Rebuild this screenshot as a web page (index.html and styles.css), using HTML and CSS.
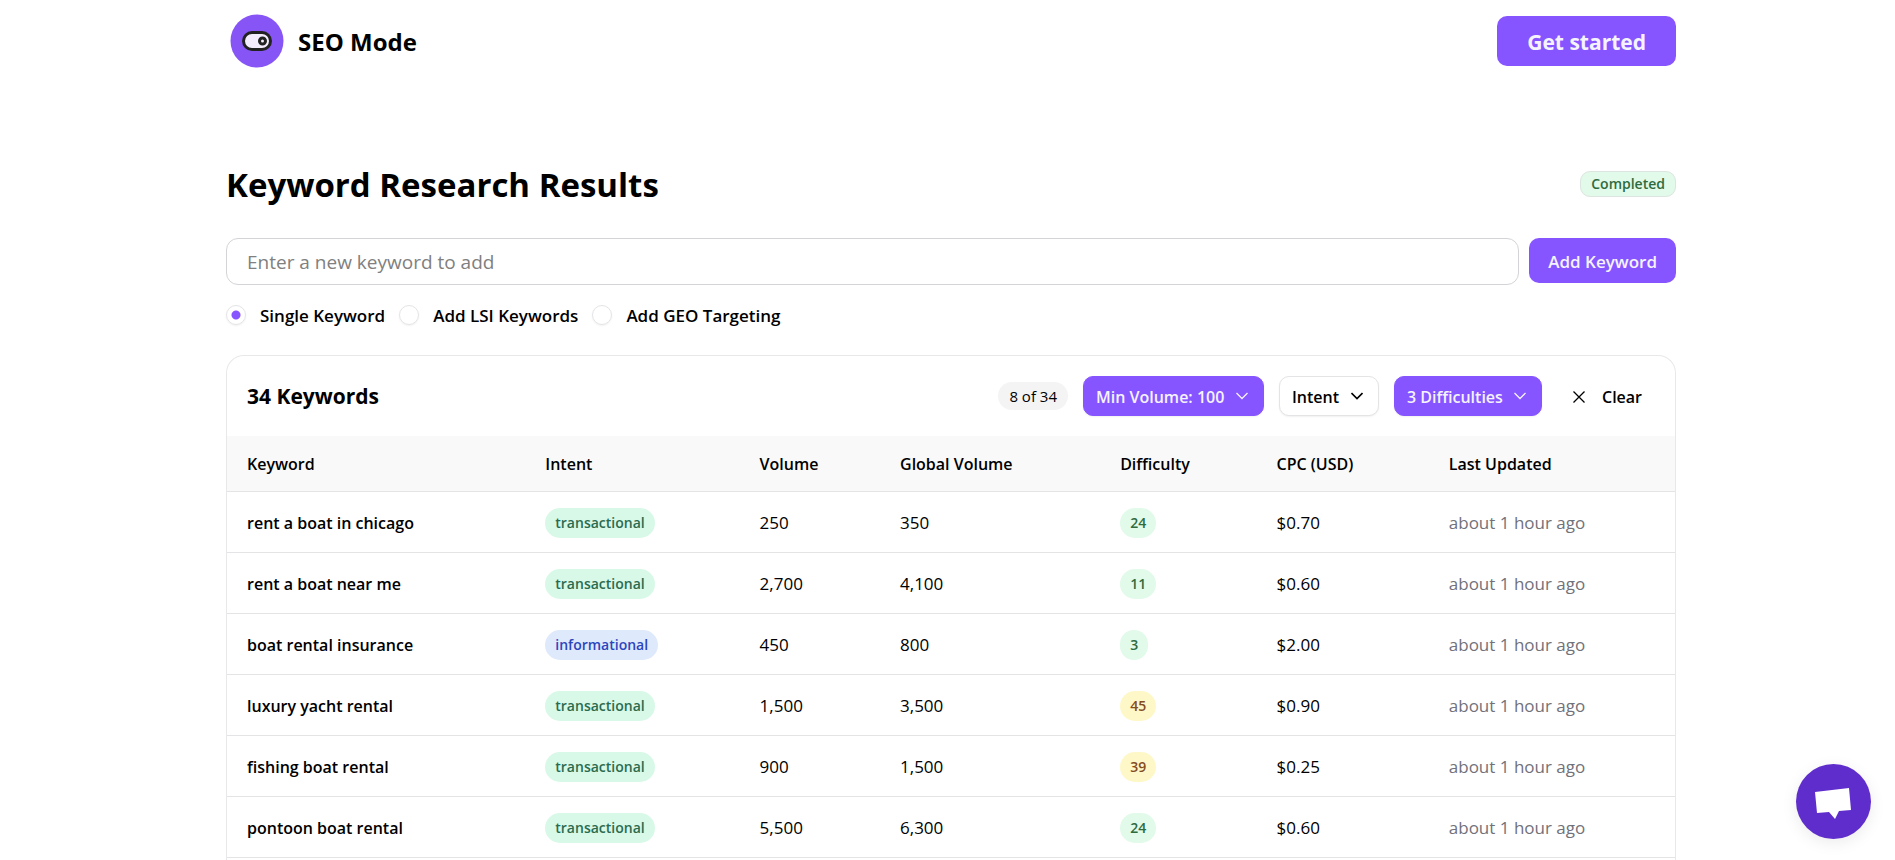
FILE: index.html
```html
<!DOCTYPE html>
<html lang="en">

<head>
    <meta charset="UTF-8">
    <meta name="viewport" content="width=device-width, initial-scale=1.0">
    <title>SEO Mode</title>
    <link rel="stylesheet" href="styles.css">
</head>

<body>
    <div class="page">
        <header class="header">
            <a class="brand" href="#">
                <svg class="logo" viewBox="0 0 54 54" aria-hidden="true">
                    <circle cx="27" cy="27" r="26.5" fill="#8755f5" />
                    <rect x="13.5" y="18.5" width="27" height="17" rx="8.5" fill="#f3edfe" stroke="#222" stroke-width="3" />
                    <circle cx="32.5" cy="27" r="3" fill="#f3edfe" stroke="#222" stroke-width="3" />
                </svg>
                <span class="brand-name">SEO Mode</span>
            </a>
            <button class="btn btn-large" type="button">Get started</button>
        </header>

        <main class="main">
            <div class="title-row">
                <h1 class="title">Keyword Research Results</h1>
                <span class="status">Completed</span>
            </div>

            <form class="add-form">
                <div class="add-row">
                    <input class="keyword-input" type="text" placeholder="Enter a new keyword to add" aria-label="New keyword">
                    <button class="btn btn-add" type="button">Add Keyword</button>
                </div>
                <div class="modes">
                    <input class="radio" type="radio" name="mode" id="mode-single" checked>
                    <label for="mode-single">Single Keyword</label>
                    <input class="radio" type="radio" name="mode" id="mode-lsi">
                    <label for="mode-lsi">Add LSI Keywords</label>
                    <input class="radio" type="radio" name="mode" id="mode-geo">
                    <label for="mode-geo">Add GEO Targeting</label>
                </div>
            </form>

            <section class="card">
                <div class="toolbar">
                    <h2 class="card-title">34 Keywords</h2>
                    <div class="filters">
                        <span class="count">8 of 34</span>
                        <div class="filter filter-active">
                            <select aria-label="Volume">
                                <option>Min Volume: 100</option>
                            </select>
                            <svg class="chevron" viewBox="0 0 12 12" aria-hidden="true"><path d="M0.5 3l5.5 5.5L11.5 3" /></svg>
                        </div>
                        <div class="filter">
                            <select aria-label="Intent">
                                <option>Intent</option>
                            </select>
                            <svg class="chevron" viewBox="0 0 12 12" aria-hidden="true"><path d="M0.5 3l5.5 5.5L11.5 3" /></svg>
                        </div>
                        <div class="filter filter-active">
                            <select aria-label="Difficulty">
                                <option>3 Difficulties</option>
                            </select>
                            <svg class="chevron" viewBox="0 0 12 12" aria-hidden="true"><path d="M0.5 3l5.5 5.5L11.5 3" /></svg>
                        </div>
                        <button class="clear" type="button">
                            <svg class="cross" viewBox="0 0 12 12" aria-hidden="true"><path d="M0.5 0.5l11 11M11.5 0.5l-11 11" /></svg>
                            Clear
                        </button>
                    </div>
                </div>

                <table class="keywords">
                    <colgroup>
                        <col class="col-keyword">
                        <col class="col-intent">
                        <col class="col-volume">
                        <col class="col-global">
                        <col class="col-difficulty">
                        <col class="col-cpc">
                        <col class="col-updated">
                    </colgroup>
                    <thead>
                        <tr>
                            <th>Keyword</th>
                            <th>Intent</th>
                            <th>Volume</th>
                            <th>Global Volume</th>
                            <th>Difficulty</th>
                            <th>CPC (USD)</th>
                            <th>Last Updated</th>
                        </tr>
                    </thead>
                    <tbody>
                        <tr>
                            <td class="keyword">rent a boat in chicago</td>
                            <td><span class="pill transactional">transactional</span></td>
                            <td>250</td>
                            <td>350</td>
                            <td><span class="pill easy">24</span></td>
                            <td>$0.70</td>
                            <td class="updated">about 1 hour ago</td>
                        </tr>
                        <tr>
                            <td class="keyword">rent a boat near me</td>
                            <td><span class="pill transactional">transactional</span></td>
                            <td>2,700</td>
                            <td>4,100</td>
                            <td><span class="pill easy">11</span></td>
                            <td>$0.60</td>
                            <td class="updated">about 1 hour ago</td>
                        </tr>
                        <tr>
                            <td class="keyword">boat rental insurance</td>
                            <td><span class="pill informational">informational</span></td>
                            <td>450</td>
                            <td>800</td>
                            <td><span class="pill easy">3</span></td>
                            <td>$2.00</td>
                            <td class="updated">about 1 hour ago</td>
                        </tr>
                        <tr>
                            <td class="keyword">luxury yacht rental</td>
                            <td><span class="pill transactional">transactional</span></td>
                            <td>1,500</td>
                            <td>3,500</td>
                            <td><span class="pill medium">45</span></td>
                            <td>$0.90</td>
                            <td class="updated">about 1 hour ago</td>
                        </tr>
                        <tr>
                            <td class="keyword">fishing boat rental</td>
                            <td><span class="pill transactional">transactional</span></td>
                            <td>900</td>
                            <td>1,500</td>
                            <td><span class="pill medium">39</span></td>
                            <td>$0.25</td>
                            <td class="updated">about 1 hour ago</td>
                        </tr>
                        <tr>
                            <td class="keyword">pontoon boat rental</td>
                            <td><span class="pill transactional">transactional</span></td>
                            <td>5,500</td>
                            <td>6,300</td>
                            <td><span class="pill easy">24</span></td>
                            <td>$0.60</td>
                            <td class="updated">about 1 hour ago</td>
                        </tr>
                    </tbody>
                </table>
            </section>
        </main>
    </div>

    <button class="chat" type="button" aria-label="Open chat">
        <svg class="chat-icon" viewBox="0 0 36 31" aria-hidden="true">
            <path d="M0 4L34 0l2 22-12 1-4 8-6-7-12 1z" fill="#fff" />
        </svg>
    </button>
</body>

</html>
```

FILE: styles.css
```css
* {
    box-sizing: border-box;
}

body {
    margin: 0;
    background-color: #fff;
    color: #000;
    font-family: "Open Sans", "Noto Sans", sans-serif;
    font-size: 17px;
    line-height: 24px;
}

button,
input,
select {
    font: inherit;
    color: inherit;
}

button {
    cursor: pointer;
}

.page {
    display: flex;
    flex-direction: column;
    min-height: 100vh;
    padding: 0 219px 0 226px;
}

.header {
    display: flex;
    justify-content: space-between;
    align-items: center;
    height: 82px;
}

.brand {
    display: flex;
    align-items: center;
    gap: 14px;
    padding-left: 4px;
    color: #000;
    text-decoration: none;
}

.logo {
    width: 54px;
    height: 54px;
}

.brand-name {
    padding-top: 2px;
    font-size: 24px;
    font-weight: 700;
}

.btn {
    border: none;
    border-radius: 10px;
    background-color: #8755ff;
    color: #f5f3ff;
    font-weight: 600;
}

.btn-large {
    height: 50px;
    padding: 2px 30px 0;
    font-size: 21px;
    font-weight: 700;
}

.btn-add {
    height: 45px;
    padding: 2px 19px 0;
}

.main {
    display: flex;
    flex-direction: column;
    flex: 1;
    padding-top: 78px;
}

.title-row {
    display: flex;
    justify-content: space-between;
    align-items: center;
    height: 48px;
}

.title {
    margin: 0;
    padding-top: 2px;
    font-size: 33px;
    font-weight: 700;
    line-height: 48px;
}

.status {
    padding: 0 10px;
    border: 1px solid #dde5e0;
    border-radius: 10px;
    background-color: #e1fae9;
    color: #2f6b3f;
    font-size: 14px;
    font-weight: 600;
}

.add-row {
    display: flex;
    gap: 10px;
    margin-top: 30px;
}

.keyword-input {
    flex: 1;
    height: 47px;
    padding: 0 20px;
    border: 1px solid #d4d4d8;
    border-radius: 12px;
    background-color: #fff;
    font-size: 19px;
}

.keyword-input::placeholder {
    color: #808080;
}

.modes {
    display: flex;
    align-items: center;
    gap: 14px;
    height: 24px;
    margin-top: 18px;
    font-weight: 600;
}

.modes label {
    padding-top: 2px;
}

.radio {
    appearance: none;
    width: 20px;
    height: 20px;
    margin: 0;
    border: 1px solid #e4e4e7;
    border-radius: 50%;
    box-shadow: 0 1px 2px rgba(0, 0, 0, 0.06);
}

.radio:checked {
    background: radial-gradient(circle, #8755ff 4px, #fff 5px);
}

.card {
    flex: 1;
    margin-top: 28px;
    border: 1px solid #e8e8ea;
    border-bottom: none;
    border-radius: 18px 18px 0 0;
}

.toolbar {
    display: flex;
    justify-content: space-between;
    align-items: center;
    height: 80px;
    padding: 0 20px;
}

.card-title {
    margin: 0;
    font-size: 21px;
    font-weight: 700;
}

.filters {
    display: flex;
    align-items: center;
    gap: 15px;
}

.count {
    padding: 2px 11px;
    border-radius: 14px;
    background-color: #f4f4f5;
    font-size: 15px;
}

.filter {
    position: relative;
}

.filter select {
    appearance: none;
    height: 40px;
    padding: 2px 38px 0 12px;
    border: 1px solid #e4e4e7;
    border-radius: 10px;
    background-color: #fff;
    box-shadow: 0 1px 2px rgba(0, 0, 0, 0.06);
    font-size: 16px;
    font-weight: 600;
    cursor: pointer;
}

.filter-active select {
    border-color: #8755ff;
    background-color: #8755ff;
    color: #f5f3ff;
}

.chevron {
    position: absolute;
    top: 14px;
    right: 16px;
    width: 12px;
    height: 12px;
    fill: none;
    stroke: #000;
    stroke-width: 1.6;
    pointer-events: none;
}

.filter-active .chevron {
    stroke: #f5f3ff;
    stroke-width: 1.3;
}

.clear {
    display: flex;
    align-items: center;
    gap: 17px;
    height: 40px;
    padding: 2px 13px 0 16px;
    border: none;
    background: none;
    font-size: 16px;
    font-weight: 600;
}

.cross {
    width: 12px;
    height: 12px;
    stroke: #000;
    stroke-width: 1.3;
}

.keywords {
    width: 100%;
    border-collapse: collapse;
    table-layout: fixed;
}

.col-keyword {
    width: 20.6%;
}

.col-intent {
    width: 14.8%;
}

.col-volume {
    width: 9.7%;
}

.col-global {
    width: 15.2%;
}

.col-difficulty {
    width: 10.8%;
}

.col-cpc {
    width: 11.9%;
}

.keywords tr {
    height: 61px;
    border-bottom: 1px solid #e4e4e7;
}

.keywords thead tr {
    height: 55px;
    background-color: #f9f9f9;
}

.keywords th,
.keywords td {
    padding: 2px 20px 0;
    text-align: left;
}

.keywords th,
.keywords .keyword {
    font-size: 16px;
    font-weight: 600;
}

.keywords .updated {
    color: #71717a;
}

.pill {
    display: inline-block;
    padding: 0 10px;
    border-radius: 15px;
    font-size: 14px;
    font-weight: 600;
    line-height: 30px;
}

.transactional {
    background-color: #d8f9e7;
    color: #2a6b50;
}

.informational {
    background-color: #dfe9fc;
    color: #2b45bd;
}

.easy {
    background-color: #e1fae9;
    color: #2f6b3f;
}

.medium {
    background-color: #fef8c8;
    color: #854d1e;
}

.chat {
    position: fixed;
    right: 24px;
    bottom: 21px;
    display: flex;
    justify-content: center;
    align-items: center;
    width: 75px;
    height: 75px;
    padding: 3px 2px 0 0;
    border: none;
    border-radius: 50%;
    background-color: #5f2dcb;
    box-shadow: 0 4px 16px rgba(0, 0, 0, 0.08);
}

.chat-icon {
    width: 36px;
    height: 31px;
}
```
